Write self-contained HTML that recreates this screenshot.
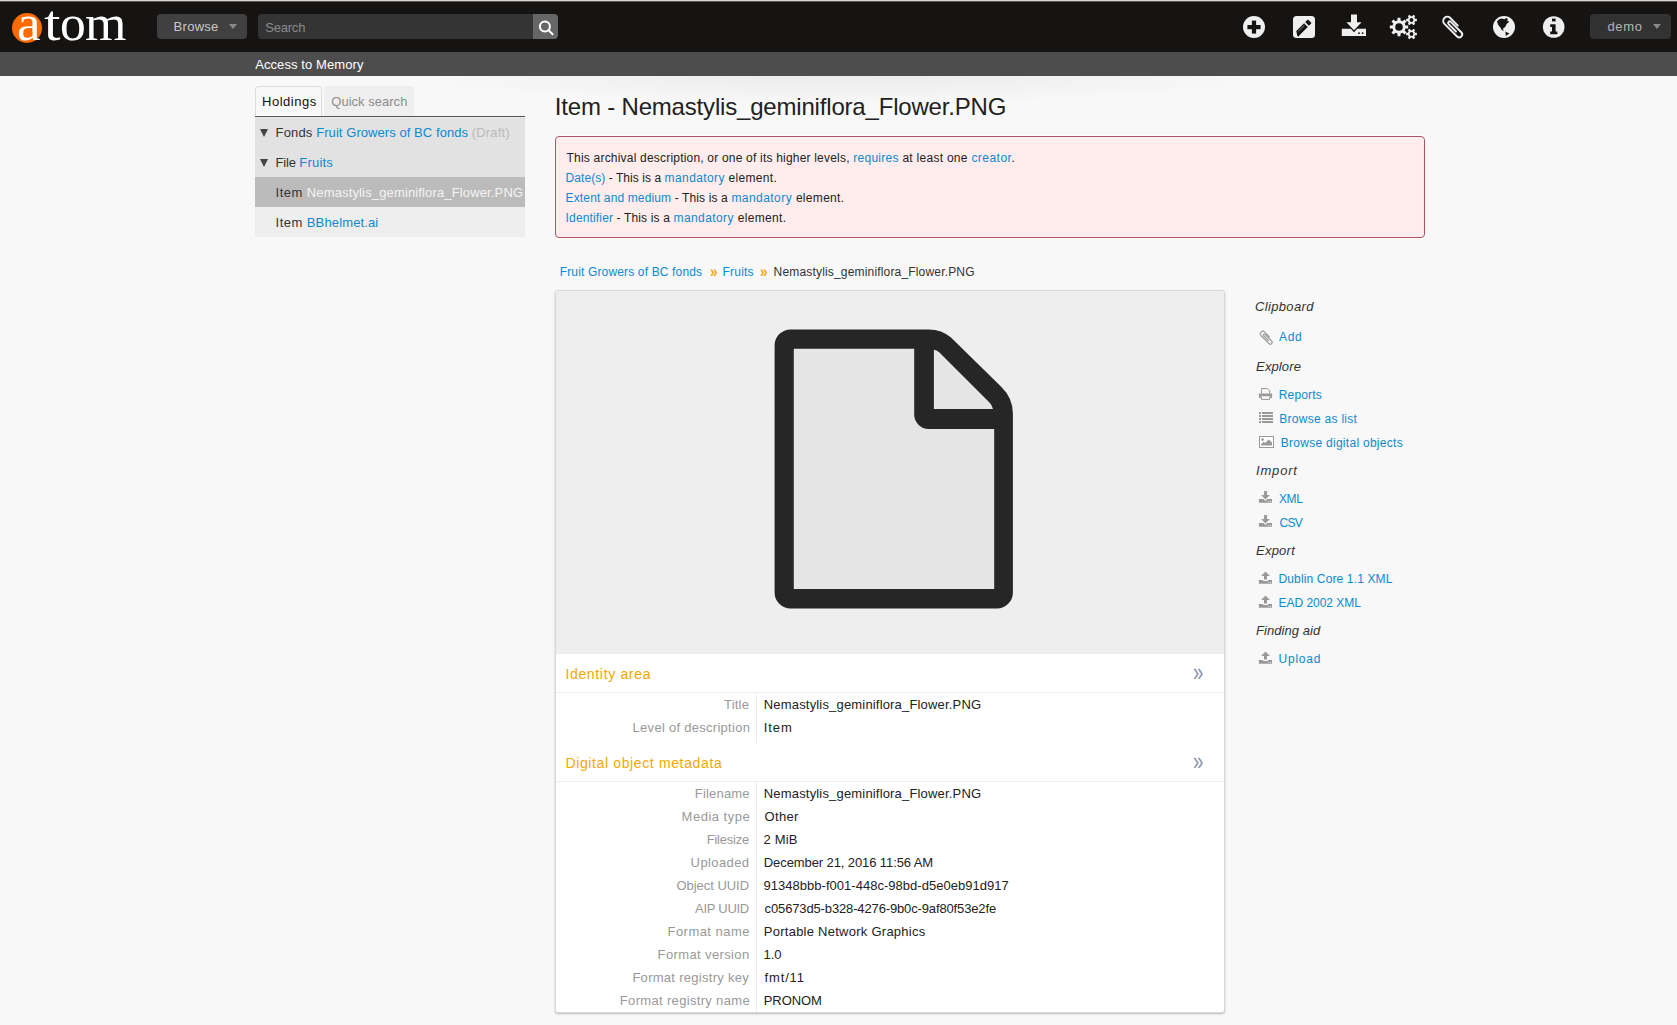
<!DOCTYPE html>
<html lang="en">
<head>
<meta charset="utf-8">
<title>Item - Nemastylis_geminiflora_Flower.PNG - Access to Memory</title>
<style>
*{box-sizing:border-box;margin:0;padding:0}
html,body{width:1677px;height:1025px;overflow:hidden}
body{background:#f8f8f8;font-family:"Liberation Sans","DejaVu Sans",sans-serif;font-size:13px;color:#222;position:relative}
a{color:#0b8ad0;text-decoration:none}
.abs{position:absolute}
.t{position:absolute;white-space:nowrap;line-height:20px;font-weight:normal}
#topline{left:0;top:0;width:1677px;height:2px;background:linear-gradient(#d9d6d3 0,#d9d6d3 50%,#5c5956 50%,#5c5956 100%)}
#header{left:0;top:2px;width:1677px;height:50px;background:#161412}
#subbar{left:0;top:52px;width:1677px;height:24px;background:#4d4d4d}
#shadow{left:255px;top:76px;width:1170px;height:30px;background:radial-gradient(ellipse 430px 28px at 50% 0%,rgba(0,0,0,.055),rgba(0,0,0,0) 100%)}
#logo-c{left:11.8px;top:12.8px;width:30.4px;height:30.4px;border-radius:50%;background:#ff6a00}
#logo span{position:absolute;top:-2px;font-family:"Liberation Serif",serif;font-size:51px;line-height:50px;color:#fff;transform-origin:0 0}
#browse{left:157px;top:14px;width:90px;height:25px;border-radius:4px;background:#404040}
.caret{position:absolute;width:0;height:0;border-left:4.7px solid transparent;border-right:4.7px solid transparent;border-top:5.2px solid #888}
#search{left:258px;top:14px;width:275px;height:25px;border-radius:4px 0 0 4px;background:#343434}
#sbtn{left:533px;top:14px;width:25px;height:25px;border-radius:0 4px 4px 0;background:#666}
#demo{left:1590px;top:14px;width:81px;height:25px;border-radius:4px;background:#323232}
#tab1{left:255px;top:86px;width:67px;height:30px;background:#f8f8f8;border:1px solid #ddd;border-bottom:1px solid #fff;border-radius:4px 4px 0 0}
#tab2{left:324px;top:86px;width:90px;height:30px;background:#efefef;border-radius:4px 4px 0 0}
#tabline{left:255px;top:116px;width:270px;height:1px;background:#555}
.trow{position:absolute;left:255px;width:270px;height:30px}
.arr{position:absolute;width:0;height:0;border-left:4.2px solid transparent;border-right:4.2px solid transparent;border-top:8px solid #444}
#alert{left:555px;top:136px;width:870px;height:102px;background:#ffecec;border:1px solid #b05262;border-radius:4px;box-shadow:0 0 0 1px #fcfdfd,inset 0 1px 0 #fff6f6}
#box{left:555px;top:290px;width:670px;height:723px;background:#fff;border:1px solid #d9d9d9;border-radius:3px;box-shadow:0 1px 2px rgba(0,0,0,.25)}
#imgarea{left:556px;top:291px;width:668px;height:363px;background:#eee}
.hl{position:absolute;left:556px;width:668px;height:1px;background:#eee}
.vl{position:absolute;left:756px;width:1px;background:#ececec}
</style>
</head>
<body>
<header id="top-bar">
<div class="abs" id="header"></div>
<div class="abs" id="topline"></div>
<div class="abs" id="subbar"></div>
<div class="abs" id="shadow"></div>
<div class="abs" id="logo-c"></div>
<div class="abs" id="logo" style="left:0;top:0"><span style="left:16.5px;transform:scaleX(1.04)">a</span><span style="left:44px;transform:scaleX(1.16)">t</span><span style="left:59.5px;transform:scaleX(1.01)">o</span><span style="left:84.6px;transform:scaleX(1.045)">m</span></div>
<div class="abs" id="browse"><span class="caret" style="left:72px;top:10px"></span></div>
<div class="abs" id="search"></div>
<div class="abs" id="sbtn"></div>
<div class="abs" id="demo"><span class="caret" style="left:63px;top:10px"></span></div>
<div class="t" style="left:173.6px;top:17.0px;font-size:13px;letter-spacing:0.280px;color:#c8c8c8;">Browse</div>
<div class="t" style="left:265.2px;top:18.0px;font-size:13px;letter-spacing:-0.200px;color:#8a8a8a;">Search</div>
<div class="t" style="left:255.2px;top:55.0px;font-size:13px;letter-spacing:0.087px;color:#fff;">Access to Memory</div>
<div class="t" style="left:1607.5px;top:17.0px;font-size:13px;letter-spacing:0.633px;color:#b5b5b5;">demo</div>
<svg class="abs" id="hicons" style="left:0;top:0" width="1677" height="52" viewBox="0 0 1677 52">
<g fill="#efefef">
<circle cx="1254" cy="27" r="11"/>
<rect x="1293" y="16" width="22" height="22" rx="3.5"/>
<path d="M1351 14.6 h6 v7.6 h4.6 l-7.6 8 l-7.6 -8 h4.6 z"/>
<path d="M1341.8 28.8 H1350.8 L1354 32.2 L1357.2 28.8 H1366 v7.2 H1341.8 z"/>
<path fill-rule="evenodd" d="M1405.50 25.38 L1408.19 25.55 L1408.19 28.45 L1405.50 28.62 L1404.74 30.46 L1406.52 32.47 L1404.47 34.52 L1402.46 32.74 L1400.62 33.50 L1400.45 36.19 L1397.55 36.19 L1397.38 33.50 L1395.54 32.74 L1393.53 34.52 L1391.48 32.47 L1393.26 30.46 L1392.50 28.62 L1389.81 28.45 L1389.81 25.55 L1392.50 25.38 L1393.26 23.54 L1391.48 21.53 L1393.53 19.48 L1395.54 21.26 L1397.38 20.50 L1397.55 17.81 L1400.45 17.81 L1400.62 20.50 L1402.46 21.26 L1404.47 19.48 L1406.52 21.53 L1404.74 23.54Z M1402.80 27.00 A3.8 3.8 0 1 0 1395.20 27.00 A3.8 3.8 0 1 0 1402.80 27.00Z M1415.10 18.79 L1416.88 18.86 L1416.88 21.14 L1415.10 21.21 L1414.35 22.51 L1415.18 24.09 L1413.20 25.23 L1412.25 23.73 L1410.75 23.73 L1409.80 25.23 L1407.82 24.09 L1408.65 22.51 L1407.90 21.21 L1406.12 21.14 L1406.12 18.86 L1407.90 18.79 L1408.65 17.49 L1407.82 15.91 L1409.80 14.77 L1410.75 16.27 L1412.25 16.27 L1413.20 14.77 L1415.18 15.91 L1414.35 17.49Z M1413.40 20.00 A1.9 1.9 0 1 0 1409.60 20.00 A1.9 1.9 0 1 0 1413.40 20.00Z M1415.10 32.79 L1416.88 32.86 L1416.88 35.14 L1415.10 35.21 L1414.35 36.51 L1415.18 38.09 L1413.20 39.23 L1412.25 37.73 L1410.75 37.73 L1409.80 39.23 L1407.82 38.09 L1408.65 36.51 L1407.90 35.21 L1406.12 35.14 L1406.12 32.86 L1407.90 32.79 L1408.65 31.49 L1407.82 29.91 L1409.80 28.77 L1410.75 30.27 L1412.25 30.27 L1413.20 28.77 L1415.18 29.91 L1414.35 31.49Z M1413.40 34.00 A1.9 1.9 0 1 0 1409.60 34.00 A1.9 1.9 0 1 0 1413.40 34.00Z"/>
<circle cx="1504" cy="27" r="11"/>
<circle cx="1553.7" cy="27" r="10.8"/>
</g>
<g fill="#161412">
<rect x="1247.4" y="25" width="13.2" height="4.2"/><rect x="1251.9" y="20.6" width="4.2" height="13"/>
<g transform="translate(1303.8,27.2) rotate(-45)"><path d="M-10.6 1.2 l2.6 -3.8 h11 v5.2 h-11 l-2.6 .4 z M4.6 -2.6 h3.8 v5.2 h-3.8 z"/><path d="M-6.5 -1 h8.5" stroke="#aaa" stroke-width=".7"/></g>
<rect x="1358.2" y="32.4" width="1.6" height="1.6"/><rect x="1361.8" y="32.4" width="1.6" height="1.6"/>
<path d="M1497 21.5 q1.5 -2.5 4.5 -3 l3 .8 l1.5 -1.3 l2 1 l-1 1.6 l2.2 1.2 l-2.6 2.2 l-1.4 3 l-2.2 1.6 l.6 2.4 l-1.8 -1 l-1.4 -2.4 l-2.2 -2.6 z M1505.4 31.6 l4 2 l-3.6 2.4 z"/>
<rect x="1552" y="18.6" width="3.6" height="2.8"/><path d="M1550.2 24.2 h5.4 v7.2 h1.8 v2.8 h-7.2 v-2.8 h1.8 v-4.4 h-1.8 z"/>
</g>
<g transform="translate(1453.2,26.8) rotate(45) scale(.96)" fill="none" stroke="#efefef" stroke-width="2" stroke-linecap="round"><path d="M2.5 -4.3 H-8.6 A4.3 4.3 0 0 0 -8.6 4.3 H10 A3.1 3.1 0 0 0 10 -1.9 H-5.4 A1.65 1.65 0 0 0 -5.4 1.4 H5.5"/></g>
<g fill="none" stroke="#fff" stroke-width="2"><circle cx="544.9" cy="26.4" r="5"/><path d="M548.6 30.2 L552.6 34.2" stroke-linecap="round"/></g>
</svg>
</header>
<aside id="sidebar">
<div class="abs" id="tab1"></div><div class="abs" id="tab2"></div><div class="abs" id="tabline"></div>
<div class="t" style="left:262.1px;top:92.0px;font-size:13px;letter-spacing:0.500px;color:#111;">Holdings</div>
<div class="t" style="left:331.3px;top:92.0px;font-size:13px;letter-spacing:0.018px;color:#8c8c8c;">Quick search</div>
<div class="trow" style="top:117px;background:#e2e2e2;border-top:1px solid #ebebeb"></div><div class="trow" style="top:147px;background:#e2e2e2"></div><div class="trow" style="top:177px;background:#bbb"></div><div class="trow" style="top:207px;background:#eee"></div>
<span class="arr" style="left:259.8px;top:129px"></span><span class="arr" style="left:259.8px;top:159px"></span>
<div class="t" style="left:275.6px;top:123.0px;font-size:13px;letter-spacing:0.116px;color:#333;"><span style="letter-spacing:0.142px">Fonds </span><span style="letter-spacing:0.066px"><a>Fruit Growers of BC fonds</a> </span><span style="letter-spacing:0.165px;color:#bbb">(Draft)</span></div>
<div class="t" style="left:275.6px;top:153.0px;font-size:13px;letter-spacing:0.070px;color:#333;"><span style="letter-spacing:-0.192px">File </span><span style="letter-spacing:0.233px"><a>Fruits</a></span></div>
<div class="t" style="left:275.6px;top:183.0px;font-size:13px;letter-spacing:0.211px;color:#333;width:249.4px;overflow:hidden;"><span style="letter-spacing:0.459px">Item </span><span style="letter-spacing:0.143px;color:#f4f4f4">Nemastylis_geminiflora_Flower.PNG</span></div>
<div class="t" style="left:275.6px;top:213.0px;font-size:13px;letter-spacing:0.333px;color:#333;"><span style="letter-spacing:0.459px">Item </span><span style="letter-spacing:0.137px"><a>BBhelmet.ai</a></span></div>
</aside>
<main id="main-column">
<h1 class="t" style="left:554.8px;top:91.0px;font-size:24px;letter-spacing:-0.185px;color:#222;line-height:32px;">Item - Nemastylis_geminiflora_Flower.PNG</h1>
<div class="abs" id="alert"></div>
<div class="t" style="left:566.6px;top:148.0px;font-size:12px;letter-spacing:0.247px;color:#222;"><span style="letter-spacing:0.199px">This archival description, or one of its higher levels, </span><span style="letter-spacing:0.278px"><a>requires</a> at least one </span><span style="letter-spacing:0.471px"><a>creator</a>.</span></div>
<div class="t" style="left:565.6px;top:168.0px;font-size:12px;letter-spacing:0.241px;color:#222;"><span style="letter-spacing:0.059px"><a>Date(s)</a> - This is a </span><span style="letter-spacing:0.397px"><a>mandatory</a> </span><span style="letter-spacing:0.309px">element.</span></div>
<div class="t" style="left:565.6px;top:188.0px;font-size:12px;letter-spacing:0.260px;color:#222;"><span style="letter-spacing:0.131px"><a>Extent and medium</a> - This is a </span><span style="letter-spacing:0.447px"><a>mandatory</a> </span><span style="letter-spacing:0.309px">element.</span></div>
<div class="t" style="left:565.6px;top:208.0px;font-size:12px;letter-spacing:0.280px;color:#222;"><span style="letter-spacing:0.149px"><a>Identifier</a> - This is a </span><span style="letter-spacing:0.407px"><a>mandatory</a> </span><span style="letter-spacing:0.346px">element.</span></div>
<nav id="breadcrumb">
<div class="t" style="left:559.7px;top:262.0px;font-size:12px;letter-spacing:0.154px;color:#222;"><a>Fruit Growers of BC fonds</a></div>
<div class="t" style="left:709.5px;top:262px;font-size:16px;font-weight:bold;color:#f5a70a;transform:scaleX(.85);transform-origin:0 0">»</div>
<div class="t" style="left:722.6px;top:262.0px;font-size:12px;letter-spacing:0.200px;color:#222;"><a>Fruits</a></div>
<div class="t" style="left:760.4px;top:262px;font-size:16px;font-weight:bold;color:#f5a70a;transform:scaleX(.85);transform-origin:0 0">»</div>
<div class="t" style="left:773.6px;top:262.0px;font-size:12px;letter-spacing:0.172px;color:#333;">Nemastylis_geminiflora_Flower.PNG</div>
</nav>
<div class="abs" id="box"></div>
<div class="abs" id="imgarea"></div>
<svg class="abs" id="fileicon" style="left:770px;top:325px" width="250" height="290" viewBox="770 325 250 290">
<path fill="#262626" d="M790.6 329.4 H928.6 Q942 329.4 951 337.6 L1001.2 386.7 Q1012.9 398 1012.9 413.6 V592.5 A16 16 0 0 1 996.9 608.5 H790.6 A16 16 0 0 1 774.6 592.5 V345.4 A16 16 0 0 1 790.6 329.4 Z"/>
<path fill="#e5e5e5" d="M793.8 348.7 H914.2 V414.5 A14.4 14.4 0 0 0 928.6 428.9 H994.2 V588.9 H793.8 Z M933.9 349.8 Q936.5 350 939.2 352.2 L989.5 402.5 Q992 405 993 409 H933.9 Z"/>
</svg>
<section id="identityArea">
<h2 class="t" style="left:565.4px;top:664.0px;font-size:14px;letter-spacing:0.667px;color:#f5a700;">Identity area</h2>
<div class="t" style="left:1193.4px;top:657px;font-size:25px;color:#8c93ab;line-height:30px;transform:scaleX(.74);transform-origin:0 0">»</div>
<div class="hl" style="top:692px"></div><div class="vl" style="top:693px;height:50px"></div>
<div class="field"><div class="t" style="left:724.0px;top:695.0px;font-size:13px;letter-spacing:0.213px;color:#999;">Title</div><div class="t" style="left:763.8px;top:695.0px;font-size:13px;letter-spacing:0.175px;color:#222;">Nemastylis_geminiflora_Flower.PNG</div></div>
<div class="field"><div class="t" style="left:632.6px;top:718.0px;font-size:13px;letter-spacing:0.279px;color:#999;">Level of description</div><div class="t" style="left:763.8px;top:718.0px;font-size:13px;letter-spacing:0.900px;color:#222;">Item</div></div>
</section>
<section id="digitalObjectMetadata">
<h2 class="t" style="left:565.4px;top:753.0px;font-size:14px;letter-spacing:0.632px;color:#f5a700;">Digital object metadata</h2>
<div class="t" style="left:1193.4px;top:746px;font-size:25px;color:#8c93ab;line-height:30px;transform:scaleX(.74);transform-origin:0 0">»</div>
<div class="hl" style="top:781px"></div><div class="vl" style="top:782px;height:230px"></div>
<div class="field"><div class="t" style="left:694.8px;top:784.0px;font-size:13px;letter-spacing:0.186px;color:#999;">Filename</div><div class="t" style="left:763.8px;top:784.0px;font-size:13px;letter-spacing:0.175px;color:#222;">Nemastylis_geminiflora_Flower.PNG</div></div>
<div class="field"><div class="t" style="left:681.6px;top:807.0px;font-size:13px;letter-spacing:0.500px;color:#999;">Media type</div><div class="t" style="left:764.6px;top:807.0px;font-size:13px;letter-spacing:0.300px;color:#222;">Other</div></div>
<div class="field"><div class="t" style="left:706.7px;top:830.0px;font-size:13px;letter-spacing:-0.229px;color:#999;">Filesize</div><div class="t" style="left:763.6px;top:830.0px;font-size:13px;letter-spacing:0.125px;color:#222;">2 MiB</div></div>
<div class="field"><div class="t" style="left:690.6px;top:853.0px;font-size:13px;letter-spacing:0.400px;color:#999;">Uploaded</div><div class="t" style="left:763.8px;top:853.0px;font-size:13px;letter-spacing:-0.096px;color:#222;">December 21, 2016 11:56 AM</div></div>
<div class="field"><div class="t" style="left:676.5px;top:876.0px;font-size:13px;letter-spacing:-0.040px;color:#999;">Object UUID</div><div class="t" style="left:763.6px;top:876.0px;font-size:13px;letter-spacing:0.020px;color:#222;">91348bbb-f001-448c-98bd-d5e0eb91d917</div></div>
<div class="field"><div class="t" style="left:695.1px;top:899.0px;font-size:13px;letter-spacing:-0.286px;color:#999;">AIP UUID</div><div class="t" style="left:764.6px;top:899.0px;font-size:13px;letter-spacing:-0.137px;color:#222;">c05673d5-b328-4276-9b0c-9af80f53e2fe</div></div>
<div class="field"><div class="t" style="left:667.5px;top:922.0px;font-size:13px;letter-spacing:0.460px;color:#999;">Format name</div><div class="t" style="left:763.8px;top:922.0px;font-size:13px;letter-spacing:0.254px;color:#222;">Portable Network Graphics</div></div>
<div class="field"><div class="t" style="left:657.6px;top:945.0px;font-size:13px;letter-spacing:0.377px;color:#999;">Format version</div><div class="t" style="left:763.6px;top:945.0px;font-size:13px;letter-spacing:-0.150px;color:#222;">1.0</div></div>
<div class="field"><div class="t" style="left:632.4px;top:968.0px;font-size:13px;letter-spacing:0.283px;color:#999;">Format registry key</div><div class="t" style="left:764.6px;top:968.0px;font-size:13px;letter-spacing:0.840px;color:#222;">fmt/11</div></div>
<div class="field"><div class="t" style="left:619.8px;top:991.0px;font-size:13px;letter-spacing:0.332px;color:#999;">Format registry name</div><div class="t" style="left:763.8px;top:991.0px;font-size:13px;letter-spacing:-0.100px;color:#222;">PRONOM</div></div>
</section>
</main>
<aside id="context-menu">
<div class="t" style="left:1254.9px;top:297.0px;font-size:13px;letter-spacing:0.362px;color:#333;font-style:italic;">Clipboard</div>
<div class="t" style="left:1279.1px;top:327.0px;font-size:12px;letter-spacing:0.650px;color:#0b8ad0;"><a>Add</a></div>
<div class="t" style="left:1256.1px;top:357.0px;font-size:13px;letter-spacing:0.117px;color:#333;font-style:italic;">Explore</div>
<div class="t" style="left:1278.8px;top:385.0px;font-size:12px;letter-spacing:0.150px;color:#0b8ad0;"><a>Reports</a></div>
<div class="t" style="left:1279.3px;top:409.0px;font-size:12px;letter-spacing:0.277px;color:#0b8ad0;"><a>Browse as list</a></div>
<div class="t" style="left:1280.7px;top:433.0px;font-size:12px;letter-spacing:0.281px;color:#0b8ad0;"><a>Browse digital objects</a></div>
<div class="t" style="left:1256.0px;top:461.0px;font-size:13px;letter-spacing:0.820px;color:#333;font-style:italic;">Import</div>
<div class="t" style="left:1278.9px;top:489.0px;font-size:12px;letter-spacing:-0.350px;color:#0b8ad0;"><a>XML</a></div>
<div class="t" style="left:1279.5px;top:513.0px;font-size:12px;letter-spacing:-0.700px;color:#0b8ad0;"><a>CSV</a></div>
<div class="t" style="left:1256.0px;top:541.0px;font-size:13px;letter-spacing:0.240px;color:#333;font-style:italic;">Export</div>
<div class="t" style="left:1278.5px;top:569.0px;font-size:12px;letter-spacing:0.139px;color:#0b8ad0;"><a>Dublin Core 1.1 XML</a></div>
<div class="t" style="left:1278.5px;top:593.0px;font-size:12px;letter-spacing:-0.027px;color:#0b8ad0;"><a>EAD 2002 XML</a></div>
<div class="t" style="left:1256.0px;top:621.0px;font-size:13px;letter-spacing:0.060px;color:#333;font-style:italic;">Finding aid</div>
<div class="t" style="left:1278.5px;top:649.0px;font-size:12px;letter-spacing:0.780px;color:#0b8ad0;"><a>Upload</a></div>
<svg class="abs" id="sicons" style="left:1250px;top:320px" width="30" height="350" viewBox="1250 320 30 350"><g fill="#999"><g transform="translate(1266.6,337.6) rotate(45) scale(.6)" fill="none" stroke="#999" stroke-width="1.9" stroke-linecap="round"><path d="M2.5 -4.3 H-8.6 A4.3 4.3 0 0 0 -8.6 4.3 H10 A3.1 3.1 0 0 0 10 -1.9 H-5.4 A1.65 1.65 0 0 0 -5.4 1.4 H5.5"/></g><path d="M1258.9 393.6 h13.2 v4.3 h-2 v-1.6 h-9.2 v1.6 h-2 z"/><path d="M1261.5 393.6 v-5.1 h5.8 l2.4 2.4 v2.7 M1261.5 396.8 v2.6 h8.2 v-2.6" fill="none" stroke="#999" stroke-width="1"/><rect x="1259" y="412" width="2" height="2"/><rect x="1262" y="412" width="11" height="2"/><rect x="1259" y="415" width="2" height="2"/><rect x="1262" y="415" width="11" height="2"/><rect x="1259" y="418" width="2" height="2"/><rect x="1262" y="418" width="11" height="2"/><rect x="1259" y="421" width="2" height="2"/><rect x="1262" y="421" width="11" height="2"/><rect x="1259.5" y="436.5" width="14" height="11" fill="#fff" stroke="#999" stroke-width="1"/><circle cx="1262.6" cy="439.6" r="1.3"/><path d="M1261 445.6 v-1.4 l2.6 -2.4 l1.4 1.2 l3.6 -3.6 l3.4 3.2 v3 z"/><path d="M1264.1 490.9 h2.9 v4 h2.9 l-4.4 4.7 l-4.4 -4.7 h3 z"/><path d="M1258.9 499.0 h4.6 l2 2 l2 -2 h4.5 v3.8 h-13.1 z"/><rect x="1268" y="500.9" width="1" height="1" fill="#e8e8e8"/><rect x="1270" y="500.9" width="1" height="1" fill="#e8e8e8"/><path d="M1264.1 514.9 h2.9 v4 h2.9 l-4.4 4.7 l-4.4 -4.7 h3 z"/><path d="M1258.9 523.0 h4.6 l2 2 l2 -2 h4.5 v3.8 h-13.1 z"/><rect x="1268" y="524.9" width="1" height="1" fill="#e8e8e8"/><rect x="1270" y="524.9" width="1" height="1" fill="#e8e8e8"/><path d="M1265.5 571.4 l4.5 4.6 h-3 v3.6 h-3 v-3.6 h-3 z"/><path d="M1258.9 580.0 h4.2 v1 h4.8 v-1 h4.1 v3.8 h-13.1 z"/><rect x="1268" y="581.9" width="1" height="1" fill="#e8e8e8"/><rect x="1270" y="581.9" width="1" height="1" fill="#e8e8e8"/><path d="M1265.5 595.4 l4.5 4.6 h-3 v3.6 h-3 v-3.6 h-3 z"/><path d="M1258.9 604.0 h4.2 v1 h4.8 v-1 h4.1 v3.8 h-13.1 z"/><rect x="1268" y="605.9" width="1" height="1" fill="#e8e8e8"/><rect x="1270" y="605.9" width="1" height="1" fill="#e8e8e8"/><path d="M1265.5 651.4 l4.5 4.6 h-3 v3.6 h-3 v-3.6 h-3 z"/><path d="M1258.9 660.0 h4.2 v1 h4.8 v-1 h4.1 v3.8 h-13.1 z"/><rect x="1268" y="661.9" width="1" height="1" fill="#e8e8e8"/><rect x="1270" y="661.9" width="1" height="1" fill="#e8e8e8"/></g></svg>
</aside>
</body>
</html>
